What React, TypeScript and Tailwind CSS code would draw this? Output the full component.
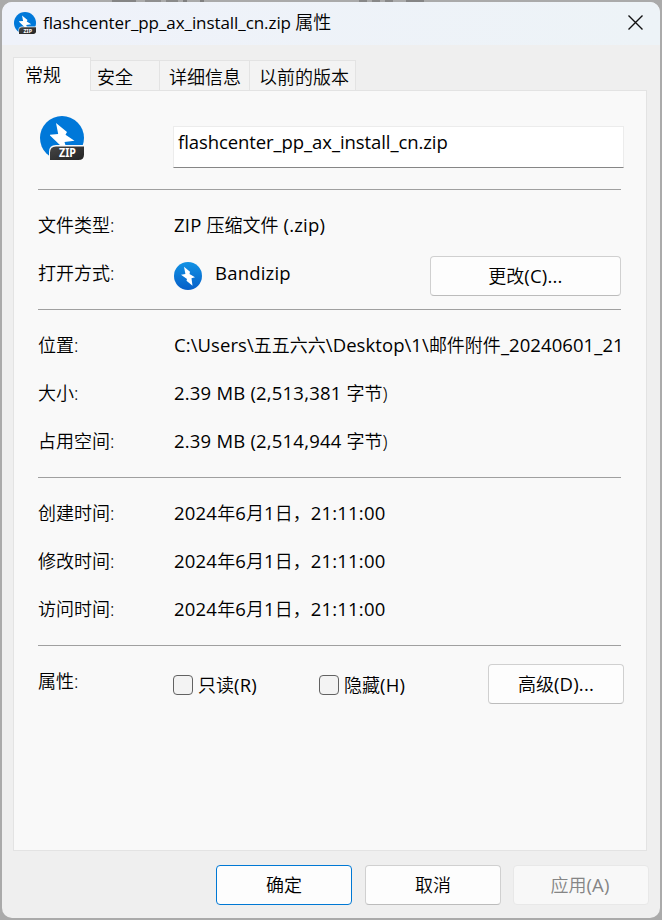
import React from "react";
import type { ReactNode } from "react";

/* Latin runs are set a touch larger than the CJK glyphs around them. */
function L({ children, className = "text-[18.5px] tracking-[0.2px]" }: { children: ReactNode; className?: string }) {
  return <span className={`font-['Open_Sans',sans-serif] font-[370] ${className}`}>{children}</span>;
}

function PathText({ children }: { children: ReactNode }) {
  return <L className="text-[18.5px] tracking-[0.07px]">{children}</L>;
}

function ZipIcon({ size }: { size: number }) {
  return (
    <svg width={size} height={size} viewBox="0 0 44 44" className="block shrink-0">
      <defs>
        <linearGradient id="badge" x1="0" y1="0" x2="1" y2="1">
          <stop offset="0" stopColor="#454545" />
          <stop offset="1" stopColor="#242424" />
        </linearGradient>
      </defs>
      <circle cx="22" cy="22" r="22" fill="#0078d9" />
      <path d="M16 7 27 16 25.500 18.800 34.500 24.700 24.500 26 26 31H22L10 19.500V18.700L18.200 18Z" fill="#fff" />
      <path d="M9 45V36Q9 29 16 29H45V45Z" fill="#f9f9f9" />
      <path d="M10 44V36.500Q10 30.500 16 30.500H44V38.500Q44 44 38.500 44Z" fill="url(#badge)" />
      <text x="27.500" y="41.200" textAnchor="middle" fontSize="11.500" fontWeight="700" fill="#fff" fontFamily="Noto Sans, sans-serif" textLength="17" lengthAdjust="spacingAndGlyphs">ZIP</text>
    </svg>
  );
}

function BandizipIcon() {
  return (
    <svg width="28" height="28" viewBox="0 0 28 28" className="block">
      <defs>
        <linearGradient id="blue" x1="0" y1="0" x2="0" y2="1">
          <stop offset="0" stopColor="#1192e4" />
          <stop offset="1" stopColor="#075fc8" />
        </linearGradient>
      </defs>
      <circle cx="14" cy="14" r="14" fill="url(#blue)" />
      <path d="M10 4.800 16 9.800 15.500 12 21 15.200 17.500 16.300 18.500 23.800 12.500 18.800 13 17 7 12.800 11.400 12Z" fill="#fff" />
    </svg>
  );
}

function Row({ label, children }: { label: ReactNode; children: ReactNode }) {
  return (
    <div className="flex h-12 items-center">
      <div className="w-[136px] shrink-0 pb-[2px]">{label}</div>
      <div className="min-w-0 flex-1 flex items-center">{children}</div>
    </div>
  );
}

function Value({ children, className = "" }: { children: ReactNode; className?: string }) {
  return <div className={`pb-[2px] ${className}`}>{children}</div>;
}

function Section({ children }: { children: ReactNode }) {
  return <section className="border-b border-[#a0a0a0] pt-3 pb-[11px]">{children}</section>;
}

function Button({ children, className }: { children: ReactNode; className: string }) {
  return (
    <button className={`flex h-10 shrink-0 items-center justify-center rounded-[4px] border whitespace-pre ${className}`}><span>{children}</span></button>
  );
}

function Check({ children }: { children: ReactNode }) {
  return (
    <label className="flex w-[146px] items-center gap-[5px]">
      <span className="h-5 w-5 shrink-0 rounded-[4px] border border-[#626262] bg-[#f3f3f3]" />
      <span>{children}</span>
    </label>
  );
}

export default function App() {
  return (
    <div className="relative h-[920px] w-[662px] overflow-hidden bg-[#aaaaaa] p-[2px] font-['Noto_Sans','Noto_Sans_CJK_SC',sans-serif] text-[18px] leading-6 font-[360] whitespace-pre text-black">
      <div className="absolute top-0 left-[112px] flex h-[2px] gap-[5px]">
        <span className="w-6 bg-[#858585]" />
        <span className="ml-1 w-4 bg-[#8f8f8f]" />
        <span className="w-3 bg-[#8a8a8a]" />
        <span className="w-1 bg-[#808080]" />
        <span className="ml-2 w-1 bg-[#808080]" />
        <span className="ml-[150px] w-2 bg-[#888]" />
        <span className="w-2 bg-[#888]" />
        <span className="w-2 bg-[#888]" />
        <span className="ml-2 w-[18px] bg-[#858585]" />
      </div>
      <div className="relative flex h-[916px] w-[658px] flex-col overflow-hidden rounded-[10px] bg-[#efefef]">
        <header className="flex h-[43px] shrink-0 items-center bg-linear-to-r from-[#eff2fa] to-[#edf3f7] pr-[17px] pb-[2px] pl-[12px]">
          <ZipIcon size={22} />
          <h1 className="ml-[7px] flex-1"><L className="text-[17px] tracking-[-0.07px]">flashcenter_pp_ax_install_cn.zip </L>属性</h1>
          <svg width="15" height="15" viewBox="0 0 15 15" className="block" stroke="#111" strokeWidth="1.400"><path d="M.5.5 14.500 14.500M14.500.5.5 14.500" /></svg>
        </header>
        <nav className="relative z-10 mt-3 ml-[11px] -mb-px flex h-[34px] shrink-0 items-end">
          <div className="h-[34px] w-[78px] border border-b-0 border-[#e3e3e3] bg-[#f9f9f9] pt-[5px] pl-[11px]">常规</div>
          <div className="h-[31px] w-[68px] border-y border-[#e3e3e3] bg-[#f3f3f3] pt-[4px] pl-[6px]">安全</div>
          <div className="h-[31px] w-[91px] border border-[#e3e3e3] bg-[#f3f3f3] pt-[4px] pl-[9px]">详细信息</div>
          <div className="h-[31px] w-[106px] border border-l-0 border-[#e3e3e3] bg-[#f3f3f3] pt-[4px] pl-[9px]">以前的版本</div>
        </nav>
        <main className="ml-[11px] flex h-[761px] w-[634px] shrink-0 flex-col border border-[#e3e3e3] bg-[#f9f9f9] pr-[25px] pl-[24px]">
          <div className="flex h-[99px] shrink-0 border-b border-[#a0a0a0]">
            <div className="w-[135px] shrink-0 pt-[25px] pl-[2px]"><ZipIcon size={44} /></div>
            <div className="mt-[35px] h-[42px] w-[451px] shrink-0 border border-[#ececec] border-b-[#868686] bg-white pt-[3px] pl-[4px]"><L className="text-[18.5px] tracking-[-0.08px]">flashcenter_pp_ax_install_cn.zip</L></div>
          </div>
          <Section>
            <Row label="文件类型:"><Value><L>ZIP </L>压缩文件<L> (.zip)</L></Value></Row>
            <Row label="打开方式:">
              <div className="mt-1 mr-[13px]"><BandizipIcon /></div>
              <Value className="flex-1"><L>Bandizip</L></Value>
              <Button className="mt-1 w-[191px] border-[#d0d0d0] border-b-[#bcbcbc] bg-[#fdfdfd]">更改<L>(C)...</L></Button>
            </Row>
          </Section>
          <Section>
            <Row label="位置:"><Value><PathText>C:\Users\</PathText>五五六六<PathText>\Desktop\1\</PathText>邮件附件<PathText>_20240601_21</PathText></Value></Row>
            <Row label="大小:"><Value><L>2.39 MB (2,513,381 </L>字节)</Value></Row>
            <Row label="占用空间:"><Value><L>2.39 MB (2,514,944 </L>字节)</Value></Row>
          </Section>
          <Section>
            {["创建时间:", "修改时间:", "访问时间:"].map((label) => (
              <Row key={label} label={label}><Value><L>2024</L>年<L>6</L>月<L>1</L>日，<L>21:11:00</L></Value></Row>
            ))}
          </Section>
          <div className="flex pt-3">
            <div className="flex h-12 w-[135px] shrink-0 items-center pb-[2px]">属性:</div>
            <div className="flex shrink-0 pt-[6px]">
              <Check>只读<L>(R)</L></Check>
              <Check>隐藏<L>(H)</L></Check>
              <Button className="ml-[23px] w-[136px] border-[#d0d0d0] border-b-[#bcbcbc] bg-[#fdfdfd]">高级<L>(D)...</L></Button>
            </div>
          </div>
        </main>
        <footer className="mt-[14px] flex gap-[13px] pl-[214px]">
          <Button className="w-[136px] border-[#0078d4] bg-[#fdfdfd]">确定</Button>
          <Button className="w-[136px] border-[#d0d0d0] border-b-[#bcbcbc] bg-[#fdfdfd]">取消</Button>
          <Button className="-ml-px w-[136px] border-[#e8e8e8] bg-[#f8f8f8] pr-[2px] text-[#858585]">应用<L>(A)</L></Button>
        </footer>
      </div>
    </div>
  );
}
